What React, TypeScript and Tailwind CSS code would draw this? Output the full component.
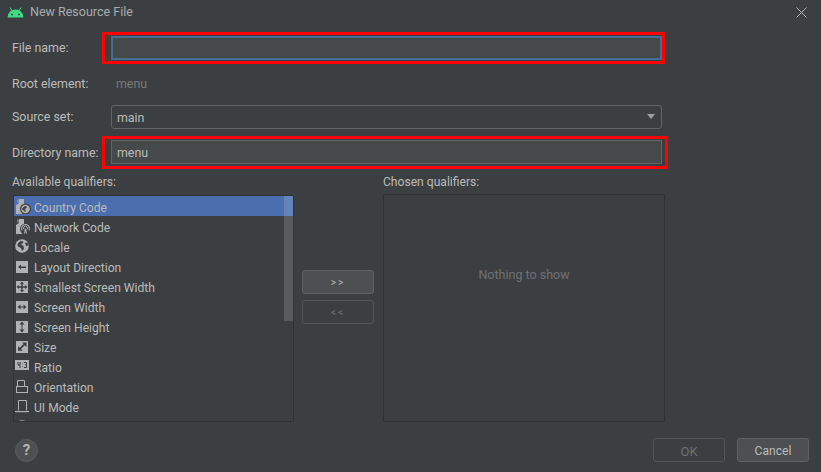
import type { ReactNode } from "react";

const FILL = "#afb1b3";
const BG = "#3c3f41";

function Box({ children }: { children: ReactNode }) {
  return (
    <svg width="16" height="16" viewBox="0 0 16 16" className="shrink-0">
      <rect x="1" y="3" width="12" height="12" fill={FILL} />
      {children}
    </svg>
  );
}

function SimDoc({ children }: { children: ReactNode }) {
  return (
    <svg width="16" height="16" viewBox="0 0 16 16" className="shrink-0">
      <path d="M1 7l3-2V1h5v15H1z" fill={FILL} />
      <path d="M2.500 1.500h1v3h-1z" fill={FILL} />
      <circle cx="10.500" cy="11" r="5.500" fill={BG} />
      {children}
    </svg>
  );
}

const icons: Record<string, ReactNode> = {
  country: (
    <SimDoc>
      <circle cx="10.500" cy="11" r="4.300" fill={FILL} />
      <path d="M7.500 10l2.500-2 2 .5-1 2-1.500.5 1.500 1.500-1 1.500-1-1.500-2-1z" fill={BG} />
    </SimDoc>
  ),
  network: (
    <SimDoc>
      <path d="M7 12.500a4 4 0 1 1 7 0" fill="none" stroke={FILL} strokeWidth="1.100" />
      <path d="M9 11.500a2 2 0 1 1 3 0" fill="none" stroke={FILL} strokeWidth="1" />
      <path d="M10 10.500h1l1 5h-1l-.5-2-.5 2H9z" fill={FILL} />
    </SimDoc>
  ),
  locale: (
    <svg width="16" height="16" viewBox="0 0 16 16" className="shrink-0">
      <circle cx="7" cy="8" r="6.800" fill={FILL} />
      <path d="M2.500 6l3-3 3 .5-1 2-2 .5 3 2 .5 3-2 2-1-3-3-1.500zM10 5l2.500-.5.8 3-2 .5z" fill={BG} />
    </svg>
  ),
  layout: (
    <Box>
      <rect x="5" y="8.500" width="6" height="1.500" fill={BG} />
      <path d="M6 6.500v5l-3-2.500z" fill={BG} />
    </Box>
  ),
  smallest: (
    <Box>
      <path d="M7 3.500l2 2.500H7.700v2.300h2.300V7L12.500 9 10 11V9.700H7.700V12H9l-2 2.500L5 12h1.300V9.700H4V11L1.500 9 4 7v1.300h2.300V6H5z" fill={BG} />
    </Box>
  ),
  width: (
    <Box>
      <path d="M2.500 9l3-2.500v2h3v-2l3 2.500-3 2.500v-2h-3v2z" fill={BG} />
    </Box>
  ),
  height: (
    <Box>
      <path d="M7 3.500l2.500 3h-2v5h2L7 14.500l-2.500-3h2v-5h-2z" fill={BG} />
    </Box>
  ),
  size: (
    <Box>
      <path d="M11.500 4.500V9L9.800 7.300 6 11l1.700 1.700H3V8.200l1.700 1.500 3.800-3.800L7 4.500z" fill={BG} />
    </Box>
  ),
  ratio: (
    <svg width="16" height="16" viewBox="0 0 16 16" className="shrink-0">
      <rect x="0" y="2" width="14" height="10" fill={FILL} />
      <path d="M3 4v3h2M5 4v6M7.500 5.500v.5M7.500 8v.5M9 4.500h2.500V6.800H10M11.500 6.800V9.500H9" fill="none" stroke={BG} strokeWidth="1" />
    </svg>
  ),
  orientation: (
    <svg width="16" height="16" viewBox="0 0 16 16" className="shrink-0">
      <path d="M2.500 8V2.500h7V8" fill="none" stroke={FILL} strokeWidth="1" />
      <rect x="1.500" y="8.500" width="11" height="6" fill="none" stroke={FILL} strokeWidth="1" />
    </svg>
  ),
  mode: (
    <svg width="16" height="16" viewBox="0 0 16 16" className="shrink-0">
      <path d="M3.500 12.500V2.500h8v10" fill="none" stroke={FILL} strokeWidth="1" />
      <rect x="0" y="13" width="14" height="1.200" fill={FILL} />
    </svg>
  ),
  night: (
    <svg width="16" height="16" viewBox="0 0 16 16" className="shrink-0">
      <circle cx="7" cy="9" r="6.800" fill={FILL} />
    </svg>
  ),
};

const qualifiers = [
  ["country", "Country Code"],
  ["network", "Network Code"],
  ["locale", "Locale"],
  ["layout", "Layout Direction"],
  ["smallest", "Smallest Screen Width"],
  ["width", "Screen Width"],
  ["height", "Screen Height"],
  ["size", "Size"],
  ["ratio", "Ratio"],
  ["orientation", "Orientation"],
  ["mode", "UI Mode"],
  ["night", ""],
];

function AndroidLogo() {
  return (
    <svg width="17" height="11" viewBox="0 0 17 11">
      <path d="M0.500 10.500a8 8 0 0 1 16 0z" fill="#3ddc84" />
      <path d="M3 0.500l2.500 4M14 0.500l-2.500 4" stroke="#3ddc84" strokeWidth="1" />
      <circle cx="5" cy="7.500" r="0.900" fill={BG} />
      <circle cx="12" cy="7.500" r="0.900" fill={BG} />
    </svg>
  );
}

export default function App() {
  return (
    <div
      className="relative flex h-[472px] w-[821px] flex-col overflow-hidden bg-[#3c3f41] text-[12.1px] text-[#bbbbbb]"
      style={{ fontFamily: 'Roboto, "Noto Sans", sans-serif' }}
    >
      {/* Title bar */}
      <div className="flex h-[24px] shrink-0 items-center pl-[7px] pr-[14px]">
        <AndroidLogo />
        <span className="ml-[6px] text-[12.5px] text-[#a9abad]">New Resource File</span>
        <svg width="11" height="11" viewBox="0 0 11 11" className="ml-auto">
          <path d="M0.500 0.500l10 10M10.500 0.500l-10 10" stroke="#b4b4b4" strokeWidth="1" />
        </svg>
      </div>

      {/* Form */}
      <div className="flex flex-col pl-[12px] pt-[12px] text-[12.4px]">
        <div className="flex items-center">
          <span className="w-[99px]">File name:</span>
          <div className="h-[24px] w-[551px] border-2 border-[#466d94] bg-[#45494a]" />
        </div>
        <div className="mt-[12px] flex h-[24px] items-center">
          <span className="w-[104px]">Root element:</span>
          <span className="text-[#787878]">menu</span>
        </div>
        <div className="mt-[9px] flex items-center">
          <span className="w-[99px]">Source set:</span>
          <div className="flex h-[24px] w-[551px] items-center justify-between rounded-[3px] border border-[#646464] pl-[5px] pr-[5px]">
            <span className="pt-[3px]">main</span>
            <svg width="10" height="6" viewBox="0 0 10 6">
              <path d="M1 0h8L5 5z" fill="#a0a0a0" />
            </svg>
          </div>
        </div>
        <div className="mt-[11px] flex items-center">
          <span className="w-[99px] pt-[2px]">Directory name:</span>
          <div className="flex h-[24px] w-[551px] items-center border border-[#646464] bg-[#45494a] pl-[5px] pt-[3px]">
            menu
          </div>
        </div>
      </div>

      {/* Qualifiers */}
      <div className="mt-[9px] flex pl-[13px]">
        <div className="flex w-[281px] flex-col">
          <span className="-ml-px h-[18px] leading-[18px]">Available qualifiers:</span>
          <div className="relative mt-[4px] h-[227px] overflow-hidden border border-[#323232]">
            {qualifiers.map(([key, label], i) => (
              <div
                key={key}
                className={`flex h-[20px] items-center pl-[1px] ${i === 0 ? "bg-[#4b6eaf]" : ""}`}
              >
                {icons[key]}
                {label && <span className="ml-[3px] pt-[4px]">{label}</span>}
              </div>
            ))}
            <div className="absolute right-0 top-0 h-[125px] w-[9px] bg-[#ffffff]/15" />
          </div>
        </div>

        <div className="ml-[8px] flex w-[72px] flex-col gap-[6px] pt-[97px]">
          <div className="flex h-[24px] items-center justify-center rounded-[3px] border border-[#5e6060] bg-[#4c5052] text-[10px] tracking-[2px]">
            &gt;&gt;
          </div>
          <div className="flex h-[24px] items-center justify-center rounded-[3px] border border-[#545556] text-[10px] tracking-[2px] text-[#6f6f6f]">
            &lt;&lt;
          </div>
        </div>

        <div className="ml-[9px] flex w-[282px] flex-col">
          <span className="h-[18px] leading-[18px]">Chosen qualifiers:</span>
          <div className="mt-[3px] flex h-[228px] justify-center border border-[#323232] pt-[71px] text-[12.5px] text-[#6f7173]">
            Nothing to show
          </div>
        </div>
      </div>

      {/* Footer */}
      <div className="mt-[16px] flex items-center pl-[15px] pr-[12px]">
        <div className="flex h-[23px] w-[23px] items-center justify-center rounded-full border border-[#5a5d5f] bg-[#4c5052] text-[15px] font-bold text-[#b4b4b4]">
          ?
        </div>
        <div className="ml-auto flex h-[24px] w-[72px] items-center justify-center rounded-[3px] border border-[#545556] pt-[3px] text-[13px] text-[#6f6f6f]">
          OK
        </div>
        <div className="ml-[12px] flex h-[24px] w-[72px] items-center justify-center rounded-[3px] border border-[#5e6060] bg-[#4c5052] pt-[3px]">
          Cancel
        </div>
      </div>

      {/* Red annotations */}
      <div className="absolute left-[102px] top-[32px] h-[32px] w-[563px] border-[3px] border-[#ff0000]" />
      <div className="absolute left-[102px] top-[136px] h-[33px] w-[566px] border-[3px] border-[#ff0000]" />
    </div>
  );
}
